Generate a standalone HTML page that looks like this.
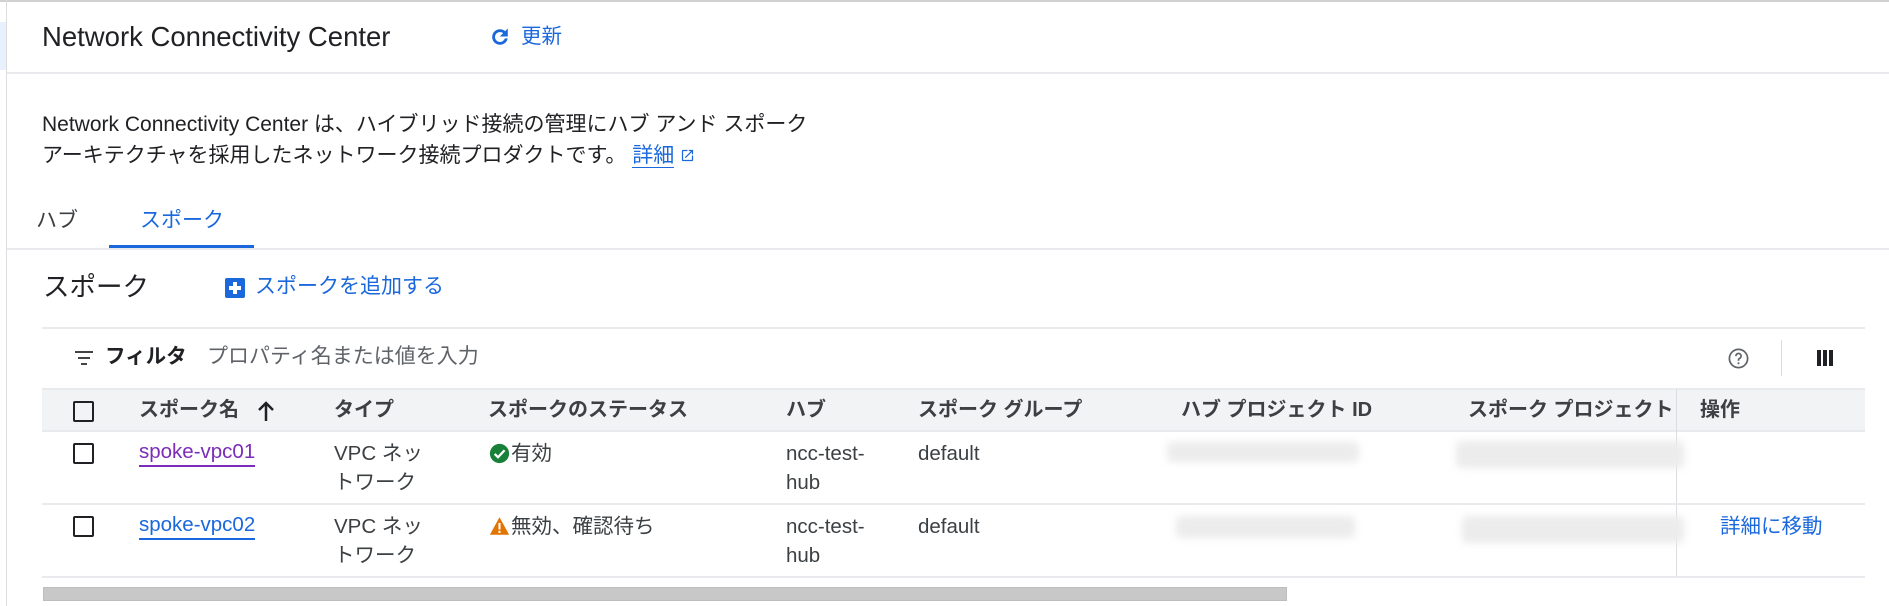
<!DOCTYPE html>
<html><head><meta charset="utf-8"><style>
*{margin:0;padding:0;box-sizing:border-box}
body{width:1889px;height:606px;overflow:hidden;background:#fff;font-family:"Liberation Sans","Noto Sans CJK JP",sans-serif;color:#202124;position:relative}
.a{position:absolute;white-space:nowrap}
.blue{color:#1a68dc}
.cb{position:absolute;width:21px;height:21px;border:2.5px solid #202124;border-radius:2px}
.t{font-size:20.5px;line-height:29px;color:#3c4043}
.h{font-size:20px;font-weight:bold;color:#3c4043}
.blur{position:absolute;background:#ececec;filter:blur(4px);border-radius:4px}
</style></head><body>
<div class="a" style="left:0;top:0;width:1889px;height:2px;background:#d0d0d0"></div>
<div class="a" style="left:6px;top:0;width:1px;height:606px;background:#dadce0"></div>
<div class="a" style="left:0;top:22px;width:6px;height:48px;background:#e8f0fe"></div>

<div class="a" style="left:42px;top:21px;font-size:27.5px;line-height:32px;color:#202124">Network Connectivity Center</div>
<svg class="a" style="left:489px;top:26px" width="22" height="22" viewBox="0 0 24 24"><path fill="#1a68dc" d="M17.65 6.35A7.96 7.96 0 0 0 12 4a8 8 0 1 0 7.73 10h-2.08A6 6 0 1 1 12 6c1.66 0 3.14.69 4.22 1.78L13 11h7V4z" stroke="#1a68dc" stroke-width="1"/></svg>
<div class="a blue" style="left:521px;top:23px;font-size:20.5px;line-height:28px">更新</div>
<div class="a" style="left:7px;top:72px;width:1882px;height:2px;background:#e8eaed"></div>

<div class="a" style="left:42px;top:109px;font-size:21px;line-height:31px">Network Connectivity Center は、ハイブリッド接続の管理にハブ アンド スポーク<br>アーキテクチャを採用したネットワーク接続プロダクトです。 <span class="blue" style="border-bottom:1.5px solid #1a68dc">詳細</span> <svg width="15" height="15" viewBox="0 0 24 24" style="vertical-align:-1px"><path fill="#1a68dc" d="M19 19H5V5h7V3H5a2 2 0 0 0-2 2v14a2 2 0 0 0 2 2h14a2 2 0 0 0 2-2v-7h-2zM14 3v2h3.59l-9.83 9.83 1.41 1.41L19 6.41V10h2V3z"/></svg></div>

<div class="a" style="left:36px;top:207px;font-size:21px;line-height:28px;color:#3c4043">ハブ</div>
<div class="a blue" style="left:140px;top:207px;font-size:21px;line-height:28px">スポーク</div>
<div class="a" style="left:7px;top:248px;width:1882px;height:2px;background:#e8eaed"></div>
<div class="a" style="left:109px;top:245px;width:145px;height:3px;background:#1a68dc"></div>

<div class="a" style="left:43px;top:270px;font-size:26.5px;line-height:34px">スポーク</div>
<div class="a" style="left:225px;top:278px;width:20px;height:20px;background:#1a68dc;border-radius:2px"></div>
<div class="a" style="left:233px;top:282px;width:4px;height:12px;background:#fff"></div>
<div class="a" style="left:229px;top:286px;width:12px;height:4px;background:#fff"></div>
<div class="a blue" style="left:255px;top:273px;font-size:21px;line-height:28px">スポークを追加する</div>

<div class="a" style="left:42px;top:327px;width:1823px;height:2px;background:#e8eaed"></div>
<div class="a" style="left:75px;top:351px;width:18px;height:2px;background:#444"></div>
<div class="a" style="left:78px;top:357px;width:12px;height:2px;background:#444"></div>
<div class="a" style="left:81px;top:363px;width:6px;height:2px;background:#444"></div>
<div class="a" style="left:105px;top:343px;font-size:20.5px;line-height:28px;font-weight:bold;color:#202124">フィルタ</div>
<div class="a" style="left:207px;top:343px;font-size:21px;line-height:28px;color:#5f6368">プロパティ名または値を入力</div>
<svg class="a" style="left:1727px;top:347px" width="23" height="23" viewBox="0 0 24 24"><circle cx="12" cy="12" r="9.5" fill="none" stroke="#5f6368" stroke-width="1.8"/><path d="M9.3 9.5a2.7 2.7 0 1 1 3.8 2.4c-.8.4-1.1.9-1.1 1.8v.6" fill="none" stroke="#5f6368" stroke-width="1.8"/><circle cx="12" cy="17" r="1.1" fill="#5f6368"/></svg>
<div class="a" style="left:1781px;top:340px;width:1px;height:36px;background:#dadce0"></div>
<div class="a" style="left:1817px;top:350px;width:4px;height:16px;background:#202124"></div>
<div class="a" style="left:1823px;top:350px;width:4px;height:16px;background:#202124"></div>
<div class="a" style="left:1829px;top:350px;width:4px;height:16px;background:#202124"></div>

<div class="a" style="left:42px;top:388px;width:1823px;height:44px;background:#f1f3f4;border-top:2px solid #e8eaed;border-bottom:2px solid #e8eaed"></div>
<div class="cb" style="left:73px;top:401px"></div>
<div class="a h" style="left:139px;top:396px;line-height:28px">スポーク名</div>
<svg class="a" style="left:257px;top:400px" width="18" height="22" viewBox="0 0 18 22"><path d="M9 21V3M2 10l7-7 7 7" fill="none" stroke="#202124" stroke-width="2.5"/></svg>
<div class="a h" style="left:334px;top:396px;line-height:28px">タイプ</div>
<div class="a h" style="left:488px;top:396px;line-height:28px">スポークのステータス</div>
<div class="a h" style="left:786px;top:396px;line-height:28px">ハブ</div>
<div class="a h" style="left:918px;top:396px;line-height:28px">スポーク グループ</div>
<div class="a h" style="left:1181px;top:396px;line-height:28px">ハブ プロジェクト ID</div>
<div class="a h" style="left:1468px;top:396px;line-height:28px;width:208px;overflow:hidden">スポーク プロジェクト ID</div>
<div class="a h" style="left:1700px;top:396px;line-height:28px">操作</div>
<div class="a" style="left:1676px;top:389px;width:1px;height:188px;background:#dadce0"></div>

<!-- row1 -->
<div class="cb" style="left:73px;top:443px"></div>
<div class="a t" style="left:139px;top:439px;color:#7b2cb8;border-bottom:2px solid #7b2cb8;line-height:26px">spoke-vpc01</div>
<div class="a t" style="left:334px;top:439px">VPC ネッ<br>トワーク</div>
<svg class="a" style="left:489px;top:443px" width="21" height="21" viewBox="0 0 24 24"><circle cx="12" cy="12" r="11" fill="#188038"/><path d="M6.5 12.5l3.8 3.8 7.5-8" fill="none" stroke="#fff" stroke-width="2.6"/></svg>
<div class="a t" style="left:511px;top:439px">有効</div>
<div class="a t" style="left:786px;top:439px">ncc-test-<br>hub</div>
<div class="a t" style="left:918px;top:439px">default</div>
<div class="blur" style="left:1167px;top:442px;width:192px;height:20px"></div>
<div class="blur" style="left:1456px;top:441px;width:228px;height:27px"></div>
<div class="a" style="left:42px;top:503px;width:1823px;height:2px;background:#e8eaed"></div>

<!-- row2 -->
<div class="cb" style="left:73px;top:516px"></div>
<div class="a t" style="left:139px;top:512px;color:#1a68dc;border-bottom:2px solid #1a68dc;line-height:26px">spoke-vpc02</div>
<div class="a t" style="left:334px;top:512px">VPC ネッ<br>トワーク</div>
<svg class="a" style="left:489px;top:516px" width="21" height="20" viewBox="0 0 24 22"><path d="M12 1L23 21H1z" fill="#e37400"/><rect x="10.8" y="7.5" width="2.4" height="7.5" fill="#fff"/><rect x="10.8" y="16.5" width="2.4" height="2.4" fill="#fff"/></svg>
<div class="a t" style="left:511px;top:512px">無効、確認待ち</div>
<div class="a t" style="left:786px;top:512px">ncc-test-<br>hub</div>
<div class="a t" style="left:918px;top:512px">default</div>
<div class="blur" style="left:1176px;top:516px;width:179px;height:22px"></div>
<div class="blur" style="left:1462px;top:516px;width:222px;height:27px"></div>
<div class="a t blue" style="left:1720px;top:512px;color:#1a68dc">詳細に移動</div>
<div class="a" style="left:42px;top:576px;width:1823px;height:2px;background:#e8eaed"></div>

<div class="a" style="left:43px;top:587px;width:1244px;height:14px;background:#c8c8c8;border:1px solid #bdbdbd"></div>
</body></html>
